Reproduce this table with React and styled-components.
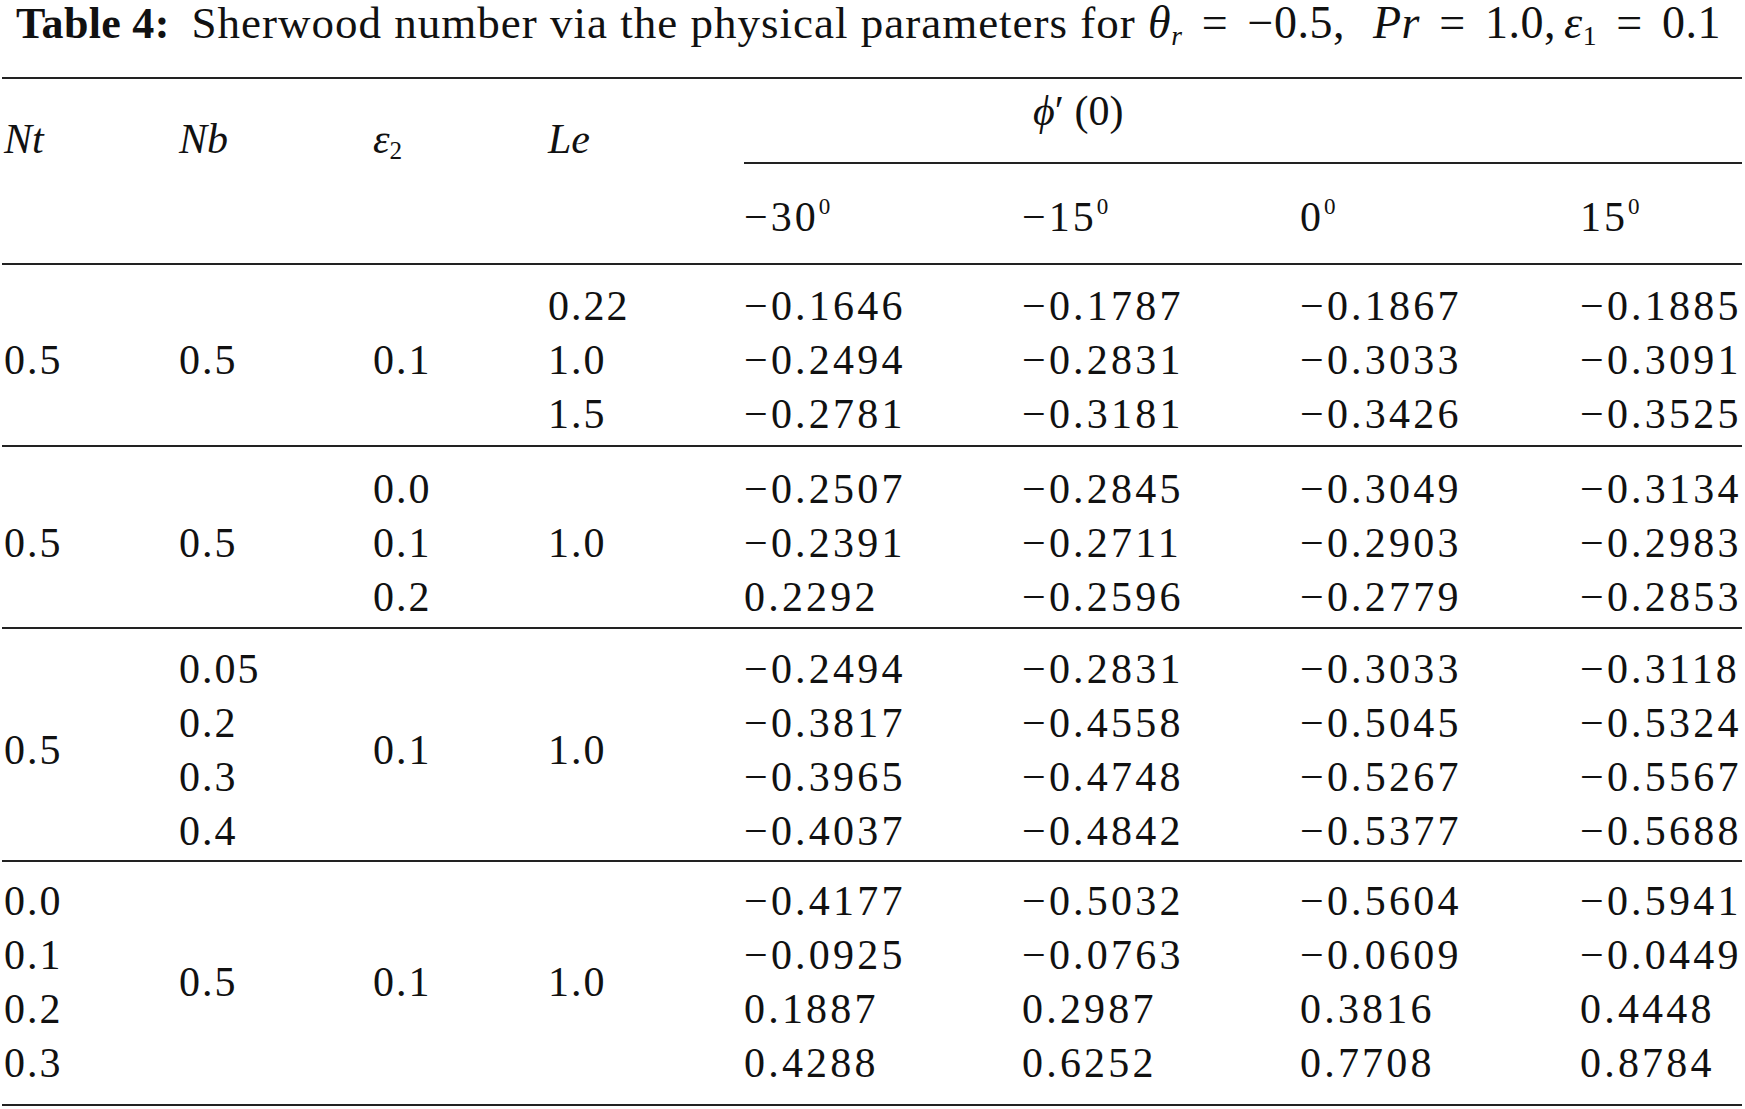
import React from "react";
import styled, { createGlobalStyle } from "styled-components";

const GlobalStyle = createGlobalStyle`
	html, body {
		margin: 0;
		padding: 0;
		background: #fff;
	}
	body {
		font-family: "Liberation Serif", "Times New Roman", serif;
		color: #111;
	}
`;

const COLS = "175px 194px 175px 198px 278px 278px 280px 1fr";

const Page = styled.div`
	width: 1740px;
	margin-left: 2px;
`;

const Caption = styled.div`
	font-size: 45px;
	line-height: 44px;
	padding: 1px 0 0 14px;
	height: 77px;
	box-sizing: border-box;
	white-space: nowrap;
	letter-spacing: 1px;
	b {
		font-weight: 700;
		font-size: 44px;
		letter-spacing: 0.3px;
	}
`;

const MathRun = styled.span`
	font-size: 46px;
	letter-spacing: 0.5px;
`;

const Var = styled.i`
	font-style: italic;
`;

const Sub = styled.sub`
	font-size: 0.6em;
	vertical-align: -0.25em;
	line-height: 0;
`;

const Sup = styled.sup`
	font-size: 0.55em;
	vertical-align: 0.75em;
	line-height: 0;
`;

const Eq = styled.span`
	margin: 0 0.42em;
`;

const Gap = styled.span`
	display: inline-block;
	width: ${props => props.w}px;
`;

const Head = styled.div`
	display: grid;
	grid-template-columns: ${COLS};
	grid-template-rows: 85px 99px;
	border-top: 2px solid #222;
	border-bottom: 2px solid #222;
	font-size: 42px;
	line-height: 54px;
`;

const Label = styled.div`
	grid-row: 1 / 3;
	padding: 33px 0 0 2px;
`;

const Span = styled.div`
	grid-column: 5 / 9;
	grid-row: 1;
	border-bottom: 2px solid #222;
	padding: 5px 0 0 289px;
`;

const Angle = styled.div`
	grid-row: 2;
	padding: 26px 0 0 0;
	letter-spacing: 3px;
`;

const Group = styled.div`
	display: grid;
	grid-template-columns: ${COLS};
	padding: ${props => props.pad};
	border-bottom: 2px solid #222;
	font-size: 42px;
	line-height: 54px;
`;

const Stack = styled.div`
	display: flex;
	flex-direction: column;
	justify-content: center;
	padding-left: ${props => (props.$data ? "0" : "2px")};
	letter-spacing: ${props => (props.$data ? "3.2px" : "2px")};
	span {
		display: block;
		white-space: nowrap;
	}
`;

const groups = [
	{
		pad: "14px 0 4px",
		nt: ["0.5"],
		nb: ["0.5"],
		e2: ["0.1"],
		le: ["0.22", "1.0", "1.5"],
		rows: [
			["−0.1646", "−0.1787", "−0.1867", "−0.1885"],
			["−0.2494", "−0.2831", "−0.3033", "−0.3091"],
			["−0.2781", "−0.3181", "−0.3426", "−0.3525"],
		],
	},
	{
		pad: "15px 0 3px",
		nt: ["0.5"],
		nb: ["0.5"],
		e2: ["0.0", "0.1", "0.2"],
		le: ["1.0"],
		rows: [
			["−0.2507", "−0.2845", "−0.3049", "−0.3134"],
			["−0.2391", "−0.2711", "−0.2903", "−0.2983"],
			["0.2292", "−0.2596", "−0.2779", "−0.2853"],
		],
	},
	{
		pad: "13px 0 2px",
		nt: ["0.5"],
		nb: ["0.05", "0.2", "0.3", "0.4"],
		e2: ["0.1"],
		le: ["1.0"],
		rows: [
			["−0.2494", "−0.2831", "−0.3033", "−0.3118"],
			["−0.3817", "−0.4558", "−0.5045", "−0.5324"],
			["−0.3965", "−0.4748", "−0.5267", "−0.5567"],
			["−0.4037", "−0.4842", "−0.5377", "−0.5688"],
		],
	},
	{
		pad: "12px 0 14px",
		nt: ["0.0", "0.1", "0.2", "0.3"],
		nb: ["0.5"],
		e2: ["0.1"],
		le: ["1.0"],
		rows: [
			["−0.4177", "−0.5032", "−0.5604", "−0.5941"],
			["−0.0925", "−0.0763", "−0.0609", "−0.0449"],
			["0.1887", "0.2987", "0.3816", "0.4448"],
			["0.4288", "0.6252", "0.7708", "0.8784"],
		],
	},
];

const Values = ({ items, data }) => (
	<Stack $data={data}>
		{items.map((v, i) => (
			<span key={i}>{v}</span>
		))}
	</Stack>
);

export default function App() {
	return (
		<Page>
			<GlobalStyle />
			<Caption>
				<b>Table 4:</b>
				<Gap w={22} />
				Sherwood number via the physical parameters for{" "}
				<MathRun>
					<Var>
						θ<Sub>r</Sub>
					</Var>
					<Eq>=</Eq>−0.5,
					<Gap w={28} />
					<Var>Pr</Var>
					<Eq>=</Eq>1.0,
					<Gap w={8} />
					<Var>ε</Var>
					<Sub>1</Sub>
					<Eq>=</Eq>0.1
				</MathRun>
			</Caption>
			<Head>
				<Label>
					<Var>Nt</Var>
				</Label>
				<Label>
					<Var>Nb</Var>
				</Label>
				<Label>
					<Var>ε</Var>
					<Sub>2</Sub>
				</Label>
				<Label>
					<Var>Le</Var>
				</Label>
				<Span>
					<Var>ϕ</Var>′ (0)
				</Span>
				<Angle>
					−30<Sup>0</Sup>
				</Angle>
				<Angle>
					−15<Sup>0</Sup>
				</Angle>
				<Angle>
					0<Sup>0</Sup>
				</Angle>
				<Angle>
					15<Sup>0</Sup>
				</Angle>
			</Head>
			{groups.map((g, gi) => (
				<Group key={gi} pad={g.pad}>
					<Values items={g.nt} />
					<Values items={g.nb} />
					<Values items={g.e2} />
					<Values items={g.le} />
					{[0, 1, 2, 3].map(c => (
						<Values key={c} data items={g.rows.map(r => r[c])} />
					))}
				</Group>
			))}
		</Page>
	);
}
